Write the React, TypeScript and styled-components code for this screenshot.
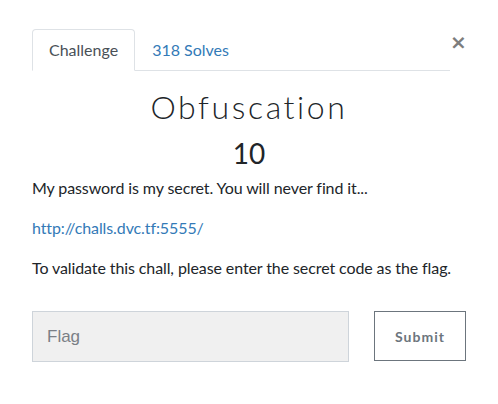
import React, { useState } from "react";
import styled, { createGlobalStyle } from "styled-components";

const GlobalStyle = createGlobalStyle`
  html, body {
    margin: 0;
    padding: 0;
    background: #ffffff;
  }
  body {
    font-family: Lato, "Noto Sans", sans-serif;
    color: #212529;
  }
  * {
    box-sizing: border-box;
  }
`;

const Modal = styled.div`
  width: 498px;
  padding: 29px 32px 0 32px;
`;

const HeaderRow = styled.div`
  display: flex;
  align-items: flex-start;
`;

const TabList = styled.ul`
  display: flex;
  flex: 1;
  margin: 0;
  padding: 0;
  list-style: none;
  border-bottom: 1px solid #dee2e6;
`;

const Tab = styled.li<{ $active?: boolean }>`
  margin-bottom: -1px;
  padding: 8px 16px;
  font-size: 16px;
  line-height: 24px;
  border: 1px solid ${(p) => (p.$active ? "#dee2e6" : "transparent")};
  border-bottom-color: ${(p) => (p.$active ? "#ffffff" : "transparent")};
  border-radius: 4px 4px 0 0;
  background: ${(p) => (p.$active ? "#ffffff" : "transparent")};
  color: ${(p) => (p.$active ? "#495057" : "#337ab7")};
  cursor: pointer;
`;

const CloseButton = styled.button`
  flex: none;
  width: 14px;
  margin: 3px 2px 0 0;
  padding: 0;
  border: none;
  background: none;
  font-family: "DejaVu Sans", sans-serif;
  font-size: 20px;
  font-weight: bold;
  line-height: 1;
  color: #7d7d7d;
  cursor: pointer;
`;

const Title = styled.h2`
  margin: 16px 0 0 0;
  text-align: center;
  font-family: Lato, sans-serif;
  font-weight: 300;
  font-size: 32px;
  line-height: 40px;
  letter-spacing: 2.6px;
  color: #212529;
`;

const Points = styled.h4`
  margin: 9px 0 0 0;
  text-align: center;
  font-weight: 400;
  font-size: 28px;
  line-height: 34px;
  color: #212529;
`;

const Description = styled.div`
  margin-top: 6px;
  font-size: 16px;
  line-height: 24px;
  letter-spacing: -0.1px;

  p {
    margin: 0 0 16px 0;
  }

  a {
    color: #337ab7;
    text-decoration: none;
  }
`;

const SubmitRow = styled.form`
  display: grid;
  grid-template-columns: 317px 92px;
  column-gap: 25px;
  margin-top: 31px;
`;

const FlagInput = styled.input`
  height: 51px;
  padding: 0 14px;
  border: 1px solid #ced4da;
  background: #f0f0f0;
  font-family: "Liberation Sans", Arial, sans-serif;
  font-size: 17px;
  color: #495057;
  outline: none;

  &::placeholder {
    color: #7a7f86;
  }
`;

const SubmitButton = styled.button`
  height: 50px;
  border: 1px solid #6c757d;
  background: #ffffff;
  font-family: Lato, sans-serif;
  font-weight: 700;
  font-size: 14px;
  letter-spacing: 1px;
  color: #6c757d;
  cursor: pointer;
  padding-top: 2px;
`;

export default function App() {
  const [tab, setTab] = useState<"challenge" | "solves">("challenge");
  const [flag, setFlag] = useState("");

  return (
    <>
      <GlobalStyle />
      <Modal>
        <HeaderRow>
          <TabList>
            <Tab $active={tab === "challenge"} onClick={() => setTab("challenge")}>
              Challenge
            </Tab>
            <Tab $active={tab === "solves"} onClick={() => setTab("solves")}>
              318 Solves
            </Tab>
          </TabList>
          <CloseButton type="button" aria-label="Close">
            ×
          </CloseButton>
        </HeaderRow>
        <Title>Obfuscation</Title>
        <Points>10</Points>
        <Description>
          <p>My password is my secret. You will never find it...</p>
          <p>
            <a href="#">http://challs.dvc.tf:5555/</a>
          </p>
          <p>To validate this chall, please enter the secret code as the flag.</p>
        </Description>
        <SubmitRow onSubmit={(e) => e.preventDefault()}>
          <FlagInput
            placeholder="Flag"
            value={flag}
            onChange={(e) => setFlag(e.target.value)}
          />
          <SubmitButton type="submit">Submit</SubmitButton>
        </SubmitRow>
      </Modal>
    </>
  );
}
